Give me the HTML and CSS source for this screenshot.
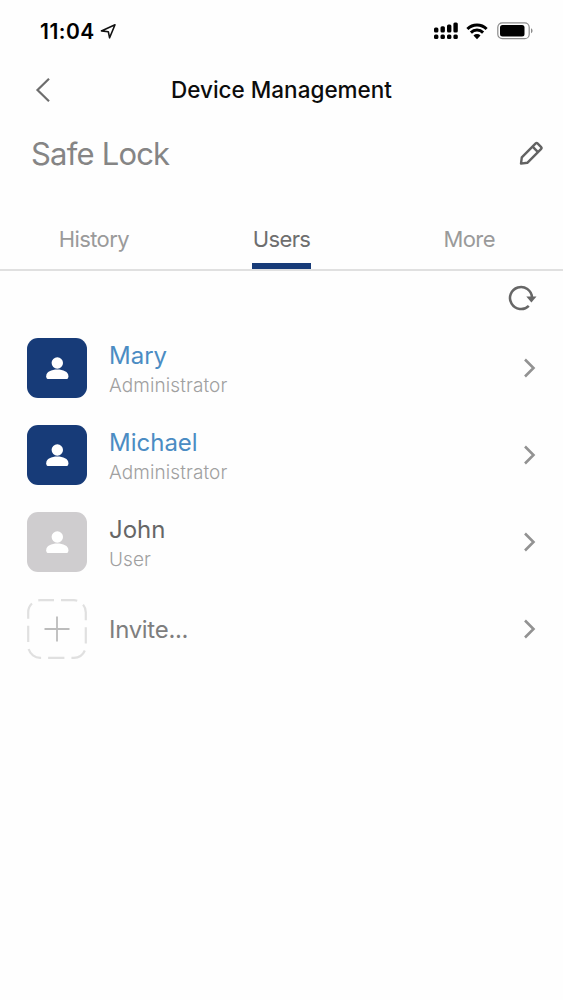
FILE: index.html
```html
<!DOCTYPE html>
<html lang="en">
<head>
<meta charset="UTF-8">
<meta name="viewport" content="width=device-width, initial-scale=1.0">
<title>Device Management</title>
<link rel="stylesheet" href="styles.css">
</head>
<body>

<svg class="sprite">
    <symbol id="person" viewBox="0 0 24 24">
        <circle cx="12.300" cy="7" r="5.700"/>
        <path d="M1.200 20.200C1.200 15.900 6.500 13.600 12.300 13.600S23.400 15.900 23.400 20.200C23.400 22.200 22.600 23 21 23H3.600C2 23 1.200 22.200 1.200 20.200Z"/>
    </symbol>
    <symbol id="chevron" viewBox="0 0 14 20">
        <path d="M2 1.500L10.500 10L2 18.500" fill="none" stroke="#929292" stroke-width="2.600"/>
    </symbol>
</svg>

<div class="status-bar">
    <span class="time">11:04</span>
    <svg class="location" width="17" height="17" viewBox="0 0 17 17">
        <path d="M1.400 7.900L15 1.800L9.600 14.800L8.300 8.700Z" fill="none" stroke="#111" stroke-width="1.600" stroke-linejoin="round"/>
    </svg>
    <svg class="signal" width="25" height="18" viewBox="0 0 25 18">
        <rect x="0" y="5.500" width="4.400" height="5" rx="1.500"/>
        <rect x="6.500" y="4.300" width="4.400" height="6.200" rx="1.500"/>
        <rect x="13" y="2.500" width="4.400" height="8" rx="1.500"/>
        <rect x="19.400" y="0.500" width="4.400" height="10" rx="1.500"/>
        <rect x="0" y="12.500" width="4.400" height="4.500" rx="1.500"/>
        <rect x="6.500" y="12.500" width="4.400" height="4.500" rx="1.500"/>
        <rect x="13" y="12.500" width="4.400" height="4.500" rx="1.500"/>
        <rect x="19.400" y="12.500" width="4.400" height="4.500" rx="1.500"/>
    </svg>
    <svg class="wifi" width="22" height="17" viewBox="0 0 22 17">
        <path d="M1.400 6A13.600 13.600 0 0 1 20.600 6M4.900 9.600A8.700 8.700 0 0 1 17.100 9.600" fill="none" stroke="#000" stroke-width="3"/>
        <path d="M7.500 12.500A5 5 0 0 1 14.500 12.500L11 16.200Z"/>
    </svg>
    <svg class="battery" width="37" height="18" viewBox="0 0 37 18">
        <rect x="0.800" y="0.800" width="31.400" height="15.900" rx="4.500" fill="none" stroke="#8c8c8c" stroke-width="1.200"/>
        <rect x="3" y="3" width="24.500" height="11.500" rx="2.500"/>
        <path d="M34 6.200C36 7 36 10.400 34 11.200Z" fill="#8c8c8c"/>
    </svg>
</div>

<div class="header">
    <svg class="back" width="16" height="26" viewBox="0 0 16 26">
        <path d="M14 1.800L2.500 13L14 24.200" fill="none" stroke="#6d6d6d" stroke-width="2.200"/>
    </svg>
    <h1>Device Management</h1>
</div>

<div class="device">
    <h2>Safe Lock</h2>
    <svg width="25" height="25" viewBox="0 0 25 25">
        <path d="M2 22.600L2.800 16.400L16.700 2.400Q17.600 1.500 18.500 2.400L22.200 6.100Q23.100 7 22.200 7.900L8.300 21.800Z" fill="none" stroke="#626262" stroke-width="2.400" stroke-linejoin="round"/>
        <path d="M13.600 5.700L19 11.100" stroke="#626262" stroke-width="2.400"/>
    </svg>
</div>

<div class="tabs">
    <div class="tab"><span>History</span></div>
    <div class="tab active"><span>Users</span></div>
    <div class="tab"><span>More</span></div>
</div>

<div class="toolbar">
    <svg width="29" height="26" viewBox="0 0 29 26">
        <path d="M20.800 20.800A11 11 0 1 1 24 12.500" fill="none" stroke="#666" stroke-width="2.500"/>
        <path d="M18.300 11.500H28.500L23.400 17.600Z" fill="#666"/>
    </svg>
</div>

<div class="user-list">
    <div class="user admin">
        <div class="avatar"><svg class="person"><use href="#person"/></svg></div>
        <div class="info">
            <div class="name">Mary</div>
            <div class="role">Administrator</div>
        </div>
        <svg class="chevron"><use href="#chevron"/></svg>
    </div>
    <div class="user admin">
        <div class="avatar"><svg class="person"><use href="#person"/></svg></div>
        <div class="info">
            <div class="name">Michael</div>
            <div class="role">Administrator</div>
        </div>
        <svg class="chevron"><use href="#chevron"/></svg>
    </div>
    <div class="user">
        <div class="avatar"><svg class="person"><use href="#person"/></svg></div>
        <div class="info">
            <div class="name">John</div>
            <div class="role">User</div>
        </div>
        <svg class="chevron"><use href="#chevron"/></svg>
    </div>
    <div class="user invite">
        <svg class="add" width="60" height="60" viewBox="0 0 60 60">
            <rect x="1.200" y="1.200" width="57.600" height="57.600" rx="12" fill="none" stroke="#e0e0e0" stroke-width="2.200" stroke-dasharray="16.300 7.010" stroke-dashoffset="2.500"/>
            <path d="M17.500 30H42.500M30 17.500V42.500" stroke="#bcbcbc" stroke-width="1.800"/>
        </svg>
        <div class="info">
            <div class="name">Invite...</div>
        </div>
        <svg class="chevron"><use href="#chevron"/></svg>
    </div>
</div>

</body>
</html>
```
FILE: styles.css
```css
body {
    font-family: Inter, "Liberation Sans", sans-serif;
    margin: 0;
    padding: 0;
    background-color: #fefefe;
}
h1, h2 {
    margin: 0;
}
.sprite {
    display: none;
}
.status-bar {
    display: flex;
    align-items: center;
    height: 62px;
    padding: 0 29px 0 40px;
}
.time {
    font-size: 21px;
    font-weight: 600;
    line-height: 26px;
    letter-spacing: 0.5px;
    padding-top: 1px;
}
.location {
    margin-left: 5px;
}
.signal {
    margin-left: auto;
}
.wifi {
    margin-left: 7px;
}
.battery {
    margin-left: 9px;
}
.header {
    display: grid;
    grid-template-columns: 60px 1fr 60px;
    align-items: center;
    height: 56px;
}
.back {
    margin-left: 35px;
}
.header h1 {
    font-size: 22.500px;
    font-weight: 550;
    padding-bottom: 2px;
    text-align: center;
    color: #0c0c0c;
}
.device {
    display: flex;
    align-items: center;
    justify-content: space-between;
    height: 70px;
    padding: 0 19px 0 31px;
}
.device h2 {
    font-size: 31px;
    font-weight: 400;
    letter-spacing: -0.8px;
    color: #858585;
}
.tabs {
    display: grid;
    grid-template-columns: repeat(3, 1fr);
    height: 61px;
    margin-top: 20px;
    border-bottom: 2px solid #e0e0e0;
}
.tab {
    display: flex;
    justify-content: center;
    font-size: 22px;
    line-height: 62px;
    letter-spacing: -0.6px;
    color: #9a9a9a;
}
.tab span {
    height: 55px;
}
.active {
    color: #6e6e6e;
}
.active span {
    padding: 0 0.5px;
    border-bottom: 6px solid #173b78;
}
.toolbar {
    display: flex;
    justify-content: flex-end;
    height: 39px;
    padding: 14px 26px 0 0;
}
.user {
    display: flex;
    align-items: center;
    height: 87px;
    padding: 0 26px 0 27px;
}
.avatar {
    display: flex;
    align-items: center;
    justify-content: center;
    width: 60px;
    height: 60px;
    border-radius: 11px;
    background-color: #cfcdcf;
}
.admin .avatar {
    background-color: #173b78;
}
.person {
    width: 24px;
    height: 24px;
    fill: #fff;
}
.info {
    flex: 1;
    margin-left: 22px;
    padding-top: 5px;
}
.name {
    font-size: 24px;
    line-height: 30px;
    color: #666;
}
.admin .name {
    color: #4b8cc3;
}
.role {
    font-size: 19px;
    line-height: 29px;
    font-weight: 300;
    letter-spacing: 0.1px;
    color: #a0a0a0;
}
.invite .info {
    padding-top: 2px;
}
.invite .name {
    letter-spacing: -0.3px;
    color: #7e7e7e;
}
.chevron {
    width: 14px;
    height: 20px;
}
```
